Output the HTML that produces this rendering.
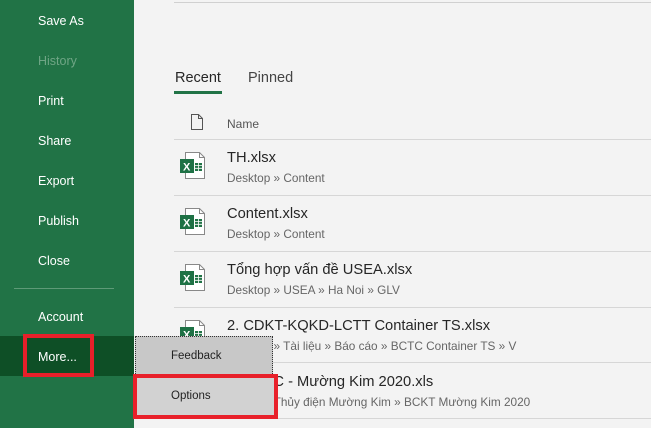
<!DOCTYPE html>
<html><head><meta charset="utf-8"><style>
*{margin:0;padding:0;box-sizing:border-box}
body{width:651px;height:428px;overflow:hidden;background:#f3f3f3;font-family:"Liberation Sans","Noto Sans CJK SC",sans-serif;position:relative}
.side{position:absolute;left:0;top:0;width:134px;height:428px;background:#217346}
.side div{position:absolute;left:38px;color:#fff;font-size:12.5px}
.abs{position:absolute}
.line{position:absolute;height:1px;background:#d6d6d6;left:174px;width:477px}
.t{position:absolute;left:227px;font-size:14.7px;color:#262626;white-space:nowrap}
.s{position:absolute;left:227px;font-size:11.8px;color:#666;white-space:nowrap}
.ic{position:absolute;left:179px}
</style></head><body>
<div class="side">
<div style="top:14px">Save As</div>
<div style="top:54px;color:#6fa585">History</div>
<div style="top:94px">Print</div>
<div style="top:134px">Share</div>
<div style="top:174px">Export</div>
<div style="top:214px">Publish</div>
<div style="top:254px">Close</div>
<div class="abs" style="left:14px;top:288px;width:100px;height:1px;background:#5e9a77"></div>
<div style="top:310px">Account</div>
<div class="abs" style="left:0;top:336px;width:134px;height:40px;background:#0e4f26"></div>
<div class="abs" style="left:23px;top:334px;width:71px;height:43px;border:4px solid #e8202a"></div>
<div style="top:350px">More...</div>
</div>
<div class="abs" style="left:174px;top:2px;width:477px;height:1px;background:#d0d0d0"></div>
<div class="abs" style="left:175px;top:70px;font-size:14.5px;color:#262626">Recent</div>
<div class="abs" style="left:248px;top:70px;font-size:14.5px;color:#444">Pinned</div>
<div class="abs" style="left:174px;top:91px;width:48px;height:3px;background:#217346"></div>
<svg class="abs" style="left:190px;top:114px" width="14" height="16"><path d="M1.5 .5h7l4 4v11h-11z M8.5 .5v4h4" fill="none" stroke="#555"/></svg>
<div class="abs" style="left:227px;top:117px;font-size:12px;color:#555">Name</div>
<div class="line" style="top:139px"></div>
<div class="line" style="top:195px"></div>
<div class="line" style="top:251px"></div>
<div class="line" style="top:307px"></div>
<div class="line" style="top:362px"></div>
<div class="line" style="top:418px"></div>

<svg width="0" height="0" style="position:absolute"><defs><g id="x"><path d="M6.5 .5h14l5 5v21h-19z" fill="#fff" stroke="#888"/><path d="M20.5 .5v5h5" fill="none" stroke="#888"/><rect x="16" y="11" width="7" height="8" fill="#217346"/><path d="M16 13.6h7M16 16.3h7M19.5 11v8" stroke="#fff" stroke-width=".8"/><rect x="1" y="7" width="14" height="14" fill="#1e7145"/><text x="4" y="18.5" font-size="11" font-weight="bold" fill="#fff" font-family="Liberation Sans">X</text></g></defs></svg>

<svg class="ic" style="top:152px" width="28" height="28"><use href="#x"/></svg>
<div class="t" style="top:150px">TH.xlsx</div><div class="s" style="top:171px">Desktop » Content</div>
<svg class="ic" style="top:208px" width="28" height="28"><use href="#x"/></svg>
<div class="t" style="top:206px">Content.xlsx</div><div class="s" style="top:227px">Desktop » Content</div>
<svg class="ic" style="top:264px" width="28" height="28"><use href="#x"/></svg>
<div class="t" style="top:262px">Tổng hợp vấn đề USEA.xlsx</div><div class="s" style="top:283px">Desktop » USEA » Ha Noi » GLV</div>
<svg class="ic" style="top:320px" width="28" height="28"><use href="#x"/></svg>
<div class="t" style="top:318px">2. CDKT-KQKD-LCTT Container TS.xlsx</div><div class="s" style="top:339px">Desktop » Tài liệu » Báo cáo » BCTC Container TS » V</div>
<div class="t" style="top:374px;left:244px">BCTC - Mường Kim 2020.xls</div><div class="s" style="top:395px;left:264px">» Thủy điện Mường Kim » BCKT Mường Kim 2020</div>

<div class="abs" style="left:135px;top:336px;width:138px;height:40px;background:#c8c8c8;border:1px dotted #333;border-bottom:none"></div>
<div class="abs" style="left:171px;top:350px;font-size:11.5px;color:#222">Feedback</div>
<div class="abs" style="left:135px;top:376px;width:140px;height:40px;background:#d2d2d2"></div>
<div class="abs" style="left:133px;top:374px;width:145px;height:45px;border:4px solid #e8202a"></div>
<div class="abs" style="left:171px;top:390px;font-size:11.5px;color:#222">Options</div>
</body></html>
